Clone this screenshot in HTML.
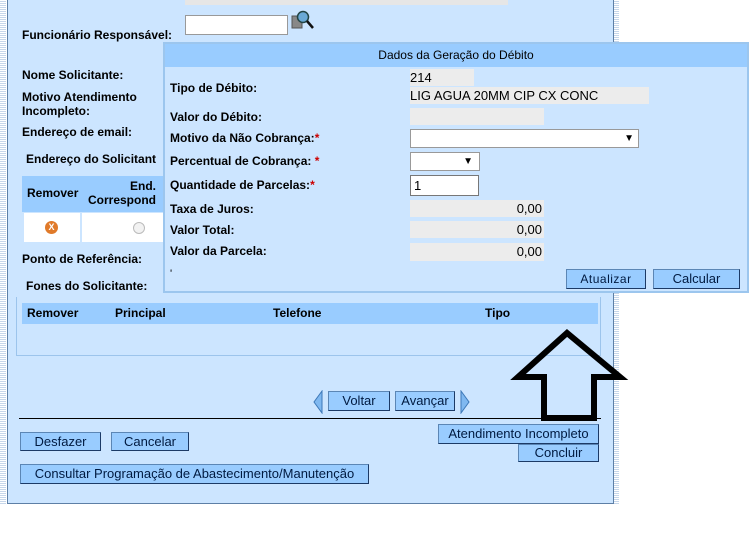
<!DOCTYPE html>
<html><head><meta charset="utf-8"><style>
*{margin:0;padding:0;box-sizing:border-box}
body{width:753px;height:535px;background:#fff;position:relative;overflow:hidden;font-family:"Liberation Sans",Arial,sans-serif;font-size:12px;color:#000}
.a{position:absolute}
.lbl{position:absolute;font-weight:bold;font-size:12px;white-space:nowrap}
.btn{position:absolute;background:#99ccff;border:1px solid #5b86b5;border-right:1px solid #1c3a66;border-bottom:1px solid #1c3a66;font-size:13px;text-align:center;color:#001a40;font-family:"Liberation Sans Narrow","Liberation Sans",sans-serif;white-space:nowrap;overflow:hidden}
.f{position:absolute;background:#ececec}
.req{color:#c00}
</style></head><body>
<div class="a" style="left:0;top:0;width:6px;height:505px;background:repeating-linear-gradient(#fff 0 1px,#c6d6ea 1px 2px)"></div>
<div class="a" style="left:613px;top:0;width:6px;height:505px;background:repeating-linear-gradient(#fff 0 1px,#c6d6ea 1px 2px)"></div>
<div class="a" style="left:7px;top:-2px;width:607px;height:506px;background:#cce5ff;border:1px solid #5d7fa6"></div>
<div class="a" style="left:185px;top:0;width:323px;height:5px;background:#e6e6e6"></div>
<div class="lbl" style="left:22px;top:28px">Funcionário Responsável:</div>
<div class="a" style="left:185px;top:15px;width:103px;height:20px;background:#fff;border:1px solid #999"></div>
<svg class="a" style="left:291px;top:9px" width="24" height="22"><rect x="1" y="7" width="10" height="12" fill="#888" stroke="#555"/><circle cx="12" cy="8" r="5.5" fill="#6aa9d6" stroke="#244" stroke-width="1.5"/><line x1="16" y1="12" x2="22" y2="19" stroke="#111" stroke-width="2.5"/></svg>
<div class="lbl" style="left:22px;top:68px">Nome Solicitante:</div>
<div class="lbl" style="left:22px;top:90px;line-height:14px">Motivo Atendimento<br>Incompleto:</div>
<div class="lbl" style="left:22px;top:125px">Endereço de email:</div>
<div class="lbl" style="left:26px;top:152px">Endereço do Solicitant</div>
<div class="a" style="left:22px;top:176px;width:141px;height:36px;background:#99ccff"></div>
<div class="lbl" style="left:27px;top:186px">Remover</div>
<div class="lbl" style="left:88px;top:179px;text-align:right;width:68px;line-height:14px">End.<br>Correspond</div>
<div class="a" style="left:24px;top:213px;width:56px;height:29px;background:#fff"></div>
<div class="a" style="left:82px;top:213px;width:81px;height:29px;background:#fff"></div>
<div class="a" style="left:45px;top:221px;width:13px;height:13px;border-radius:50%;background:#e07a2a;color:#fff;font-size:9px;font-weight:bold;text-align:center;line-height:13px">X</div>
<div class="a" style="left:133px;top:222px;width:12px;height:12px;border-radius:50%;background:#f2f2f2;border:1px solid #bbb"></div>
<div class="lbl" style="left:22px;top:252px">Ponto de Referência:</div>
<div class="lbl" style="left:26px;top:279px">Fones do Solicitante:</div>
<div class="a" style="left:16px;top:297px;width:585px;height:59px;border:1px solid #9cc4ec;border-top:none"></div>
<div class="a" style="left:22px;top:303px;width:576px;height:21px;background:#99ccff"></div>
<div class="lbl" style="left:27px;top:306px">Remover</div>
<div class="lbl" style="left:115px;top:306px">Principal</div>
<div class="lbl" style="left:273px;top:306px">Telefone</div>
<div class="lbl" style="left:485px;top:306px">Tipo</div>
<svg class="a" style="left:312px;top:390px" width="12" height="24"><path d="M10 1 L2 12 L10 23 Z" fill="#7fb8f0" stroke="#3d78b8"/></svg>
<div class="btn" style="left:328px;top:391px;width:62px;height:20px;line-height:18px">Voltar</div>
<div class="btn" style="left:395px;top:391px;width:60px;height:20px;line-height:18px">Avançar</div>
<svg class="a" style="left:459px;top:390px" width="12" height="24"><path d="M2 1 L10 12 L2 23 Z" fill="#7fb8f0" stroke="#3d78b8"/></svg>
<div class="a" style="left:19px;top:418px;width:582px;height:1px;background:#000"></div>
<div class="btn" style="left:20px;top:432px;width:81px;height:19px;line-height:17px">Desfazer</div>
<div class="btn" style="left:111px;top:432px;width:78px;height:19px;line-height:17px">Cancelar</div>
<div class="btn" style="left:438px;top:424px;width:161px;height:20px;line-height:18px">Atendimento Incompleto</div>
<div class="btn" style="left:518px;top:444px;width:81px;height:18px;line-height:16px">Concluir</div>
<div class="btn" style="left:20px;top:464px;width:349px;height:20px;line-height:18px">Consultar Programação de Abastecimento/Manutenção</div>
<svg class="a" style="left:510px;top:326px" width="120" height="100"><path d="M57 7 L8 51 L34 51 L34 92 L84 92 L84 51 L110 51 Z" fill="none" stroke="#000" stroke-width="6" stroke-linejoin="miter"/></svg>
<!-- modal -->
<div class="a" style="left:163px;top:42px;width:586px;height:251px;background:#cce5ff;border:2px solid #9cc6ee"></div>
<div class="a" style="left:165px;top:44px;width:582px;height:23px;background:#99ccff;text-align:center;line-height:23px;font-size:12px">Dados da Geração do Débito</div>
<div class="lbl" style="left:170px;top:81px">Tipo de Débito:</div>
<div class="lbl" style="left:170px;top:110px">Valor do Débito:</div>
<div class="lbl" style="left:170px;top:131px">Motivo da Não Cobrança:<span class="req">*</span></div>
<div class="lbl" style="left:170px;top:154px">Percentual de Cobrança: <span class="req">*</span></div>
<div class="lbl" style="left:170px;top:178px">Quantidade de Parcelas:<span class="req">*</span></div>
<div class="lbl" style="left:170px;top:202px">Taxa de Juros:</div>
<div class="lbl" style="left:170px;top:223px">Valor Total:</div>
<div class="lbl" style="left:170px;top:244px">Valor da Parcela:</div>
<div class="a" style="left:170px;top:268px;font-size:11px">'</div>
<div class="f" style="left:410px;top:69px;width:64px;height:17px;line-height:17px;font-size:13px">214</div>
<div class="f" style="left:410px;top:87px;width:239px;height:17px;line-height:17px;font-size:13px">LIG AGUA 20MM CIP CX CONC</div>
<div class="f" style="left:410px;top:108px;width:134px;height:17px"></div>
<div class="a" style="left:410px;top:129px;width:229px;height:19px;background:#fff;border:1px solid #999;font-size:10px;text-align:right;padding-right:4px;line-height:17px">▼</div>
<div class="a" style="left:410px;top:152px;width:70px;height:19px;background:#fff;border:1px solid #999;font-size:10px;text-align:right;padding-right:6px;line-height:17px">▼</div>
<div class="a" style="left:410px;top:175px;width:69px;height:21px;background:#fff;border:1px solid #777;font-size:13px;padding-left:3px;line-height:19px">1</div>
<div class="f" style="left:410px;top:200px;width:134px;height:17px;text-align:right;font-size:13px;line-height:17px;padding-right:2px">0,00</div>
<div class="f" style="left:410px;top:221px;width:134px;height:17px;text-align:right;font-size:13px;line-height:17px;padding-right:2px">0,00</div>
<div class="f" style="left:410px;top:243px;width:134px;height:18px;text-align:right;font-size:13px;line-height:17px;padding-right:2px">0,00</div>
<div class="btn" style="left:566px;top:269px;width:80px;height:20px;line-height:18px;font-size:12px;letter-spacing:.5px">Atualizar</div>
<div class="btn" style="left:653px;top:269px;width:87px;height:20px;line-height:18px">Calcular</div>
</body></html>
